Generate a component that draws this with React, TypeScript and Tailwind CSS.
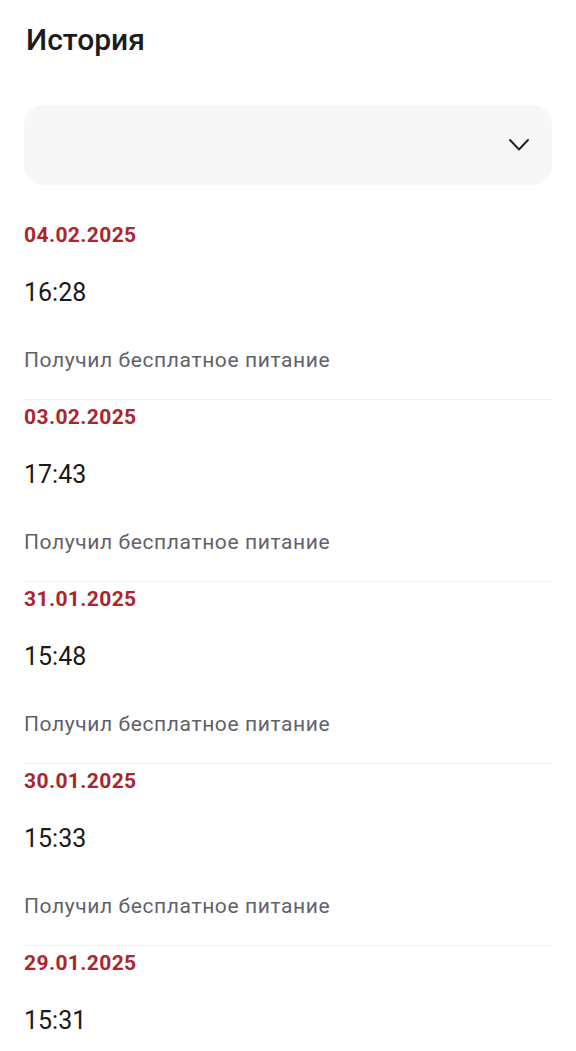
const ENTRIES = [
  { date: "04.02.2025", time: "16:28", note: "Получил бесплатное питание" },
  { date: "03.02.2025", time: "17:43", note: "Получил бесплатное питание" },
  { date: "31.01.2025", time: "15:48", note: "Получил бесплатное питание" },
  { date: "30.01.2025", time: "15:33", note: "Получил бесплатное питание" },
  // последняя запись уходит за нижний край экрана
  { date: "29.01.2025", time: "15:31", note: "" },
];

const App = () => {
  return (
    <div
      className="h-screen bg-white px-6 pt-[22px] overflow-hidden"
      style={{ fontFamily: "Roboto, 'Noto Sans', sans-serif" }}
    >
      <h1 className="text-[30px] leading-9 font-medium text-[#1c1c1c] pl-[2px]">
        История
      </h1>

      {/* выбор ребёнка, имя скрыто */}
      <div className="mt-[47px] h-[80px] rounded-[20px] bg-[#f7f7f7] flex items-center justify-end pr-[22px]">
        <svg width="22" height="14" viewBox="0 0 22 14" fill="none">
          <polyline
            points="2,2 11,11.5 20,2"
            stroke="#222"
            strokeWidth="1.9"
            strokeLinecap="round"
            strokeLinejoin="round"
          />
        </svg>
      </div>

      <div className="mt-[33px]">
        {ENTRIES.map((entry, index) => (
          <div
            key={entry.date}
            className={`pt-[5px] pb-[26px] ${index > 0 ? "border-t border-[#f0f0f0]" : ""}`}
          >
            <div className="text-[21px] leading-6 font-bold tracking-[0.4px] text-[#ab252d]">
              {entry.date}
            </div>
            <div className="mt-[31px] text-[25px] leading-[30px] text-[#1a1a1a]">
              {entry.time}
            </div>
            {entry.note && (
              <>
                <div className="h-[39px]" />
                <div className="text-[21px] leading-[26px] tracking-[0.6px] text-[#5f626a]">
                  {entry.note}
                </div>
              </>
            )}
          </div>
        ))}
      </div>
    </div>
  );
};

export default App;
